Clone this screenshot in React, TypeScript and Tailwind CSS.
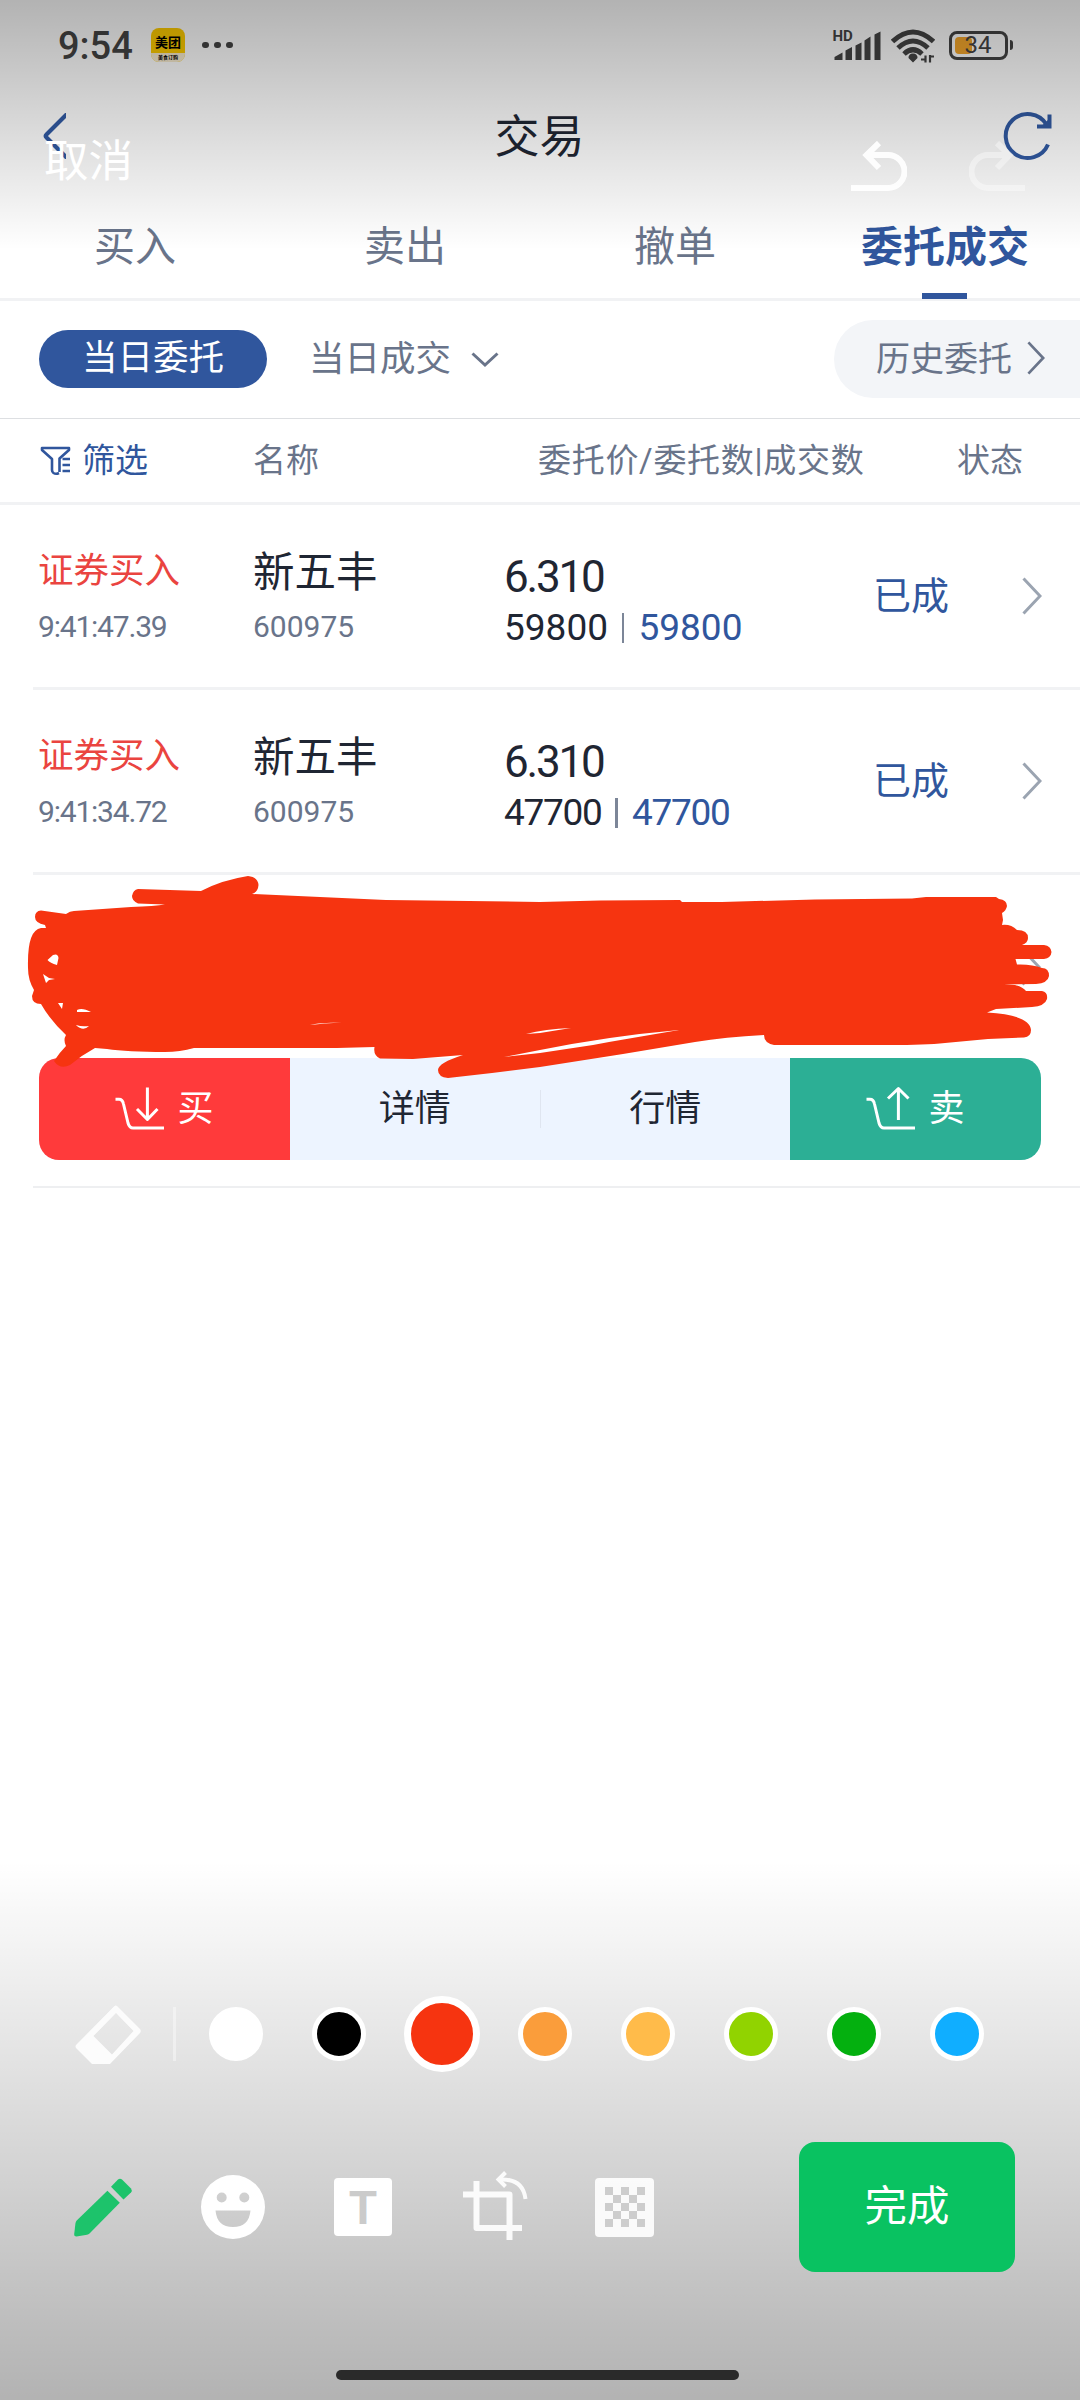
import { clsx } from "clsx"

const tabs = ["买入", "卖出", "撤单", "委托成交"]

const orders = [
  { side: "证券买入", time: "9:41:47.39", name: "新五丰", code: "600975", price: "6.310", amount: "59800", filled: "59800", status: "已成", tracking: "tracking-normal" },
  { side: "证券买入", time: "9:41:34.72", name: "新五丰", code: "600975", price: "6.310", amount: "47700", filled: "47700", status: "已成", tracking: "tracking-[-1.3px]" },
]

const swatches = [
  { name: "white", bg: "bg-white" },
  { name: "black", bg: "bg-black" },
  { name: "red", bg: "bg-[#f63410]", selected: true },
  { name: "orange", bg: "bg-[#fa9d3b]" },
  { name: "yellow", bg: "bg-[#ffbb4a]" },
  { name: "lime", bg: "bg-[#91d300]" },
  { name: "green", bg: "bg-[#04b00f]" },
  { name: "blue", bg: "bg-[#10aeff]" },
]

function Chevron({ className }: { className?: string }) {
  return (
    <svg viewBox="0 0 20 38" fill="none" stroke="currentColor" strokeWidth="3" className={className}>
      <path d="M1.5 1.5 L18 19 L1.5 36.5" />
    </svg>
  )
}

function CartIcon({ up }: { up?: boolean }) {
  return (
    <svg width="50" height="46" viewBox="0 0 50 46" fill="none" stroke="currentColor" strokeWidth="3" strokeLinejoin="round">
      <path d="M0.5 13.3 H4 Q7.5 13.3 8.5 18 L13 37 Q14.5 42 18 42 H49" />
      {up ? <path d="M32.4 34 V3 M22 12.5 L32.4 2.5 L42.5 12.5" /> : <path d="M32.4 1.5 V33 M22 23 L32.4 33.5 L42.5 23" />}
    </svg>
  )
}

function StatusBar() {
  return (
    <div className="flex h-[90px] items-center pr-[67px] pl-[58px] text-[#444]">
      <span className="w-[93px] pt-[1px] text-[38px] leading-none font-medium">9:54</span>
      <div className="flex h-[34px] w-[34px] flex-col overflow-hidden rounded-lg bg-[#fc0] text-center text-black">
        <span className="h-[25px] text-[13px] leading-[29px] font-bold">美团</span>
        <span className="h-[9px] bg-[#f8ecd0] text-[5px] leading-[8px] font-bold">美食订购</span>
      </div>
      <div className="ml-[17px] flex gap-[5.5px]">
        <i className="size-[6.5px] rounded-full bg-[#444]" />
        <i className="size-[6.5px] rounded-full bg-[#444]" />
        <i className="size-[6.5px] rounded-full bg-[#444]" />
      </div>
      <div className="ml-auto flex items-center">
        <div className="relative mr-[10px] h-[32px] w-[49px]">
          <span className="absolute top-0 left-[1px] text-[15px] leading-none font-bold">HD</span>
          <svg viewBox="0 0 49 32" className="h-[32px] w-[49px]" fill="currentColor">
            <path d="M2.5 31 V28 L10.5 23.5 V31 Z M13.500 31 V21.500 L20 18 V31 Z M23.500 31 V16.500 L29.500 13.500 V31 Z M32.500 31 V11.500 L38.500 7.500 V31 Z M42.500 31 V5.500 L48.500 2.500 V31 Z" />
          </svg>
        </div>
        <svg viewBox="0 0 44 34" className="mt-[2px] mr-[14px] h-[34px] w-[44px]" fill="none" stroke="currentColor" strokeWidth="5">
          <path d="M1.5 12.5 Q22 -6.5 42.500 12.500 M7 19 Q22 5 37 19 M13 25 Q22 16.500 31 25" />
          <path d="M22 24.500 a4 4 0 0 1 4.500 4.500 L22 33.500 L17.500 29 a4 4 0 0 1 4.500 -4.500" fill="currentColor" stroke="none" />
          <path d="M34.500 26.500 V33.500 M39 26 V33.500 M30 30.500 H34 M39 27.500 H43" strokeWidth="2.200" />
        </svg>
        <div className="relative flex h-[29px] w-[59px] items-center justify-center rounded-lg border-[3px] border-[#444]">
          <i className="absolute top-[3px] left-[3px] h-[17px] w-[17px] rounded-sm bg-[#f6a82c]" />
          <span className="relative text-[24px] leading-none">34</span>
        </div>
        <i className="ml-[2px] h-[10px] w-[3.5px] rounded-r bg-[#444]" />
      </div>
    </div>
  )
}

function TitleBar() {
  return (
    <div className="grid h-[92px] grid-cols-[1fr_auto_1fr] items-center pr-[27px] pl-[42px]">
      <svg width="24" height="46" viewBox="0 0 24 46" fill="none" stroke="#315aa3" strokeWidth="4.200" strokeLinecap="round" strokeLinejoin="round">
        <path d="M24 2 L4.500 21.500 Q3 23 4.500 24.500 L24 44" />
      </svg>
      <h1 className="-ml-[16px] pt-[3px] text-[45px] leading-none text-[#1f2633]">交易</h1>
      <svg width="50" height="50" viewBox="0 0 50 50" fill="none" stroke="#315aa3" strokeWidth="4" className="justify-self-end">
        <path d="M45 33.500 A22 22 0 1 1 43.500 13.500" />
        <path d="M46.500 3.500 V15.500 H34" />
        <path d="M46 8 V15.500 H38 Z" fill="#315aa3" stroke="none" />
      </svg>
    </div>
  )
}

function Tabs() {
  return (
    <div className="grid h-[119px] grid-cols-4 border-b-[3px] border-[#f1f2f4]">
      {tabs.map((tab, i) => {
        const active = i === tabs.length - 1
        return (
          <div key={tab} className="relative flex justify-center pt-[45px]">
            <span
              className={clsx(
                "leading-none",
                active ? "text-[42px] font-bold text-[#30569d]" : "text-[41px] text-[#69748a]"
              )}
            >
              {tab}
            </span>
            {active && <i className="absolute -bottom-[1px] left-[112px] h-[6px] w-[45px] bg-[#30569d]" />}
          </div>
        )
      })}
    </div>
  )
}

function SubTabs() {
  return (
    <div className="flex h-[118px] items-center border-b border-[#dddfe2] pl-[39px] text-[35.5px] leading-none text-[#69748a]">
      <span className="mb-[1px] flex h-[58px] w-[228px] items-center justify-center rounded-full bg-[#30569d] text-white">当日委托</span>
      <span className="ml-[42px]">当日成交</span>
      <svg width="28" height="16" viewBox="0 0 28 16" fill="none" stroke="currentColor" strokeWidth="3" className="ml-[20px]">
        <path d="M1.500 1.500 L14 13 L26.500 1.500" />
      </svg>
      <div className="mb-[1px] ml-auto flex h-[78px] w-[246px] items-center rounded-l-full bg-[#f3f5f8] pl-[42px]">
        <span className="text-[34px]">历史委托</span>
        <Chevron className="mb-[3px] ml-[15px] h-[34px] w-[18px]" />
      </div>
    </div>
  )
}

function TableHead() {
  return (
    <div className="flex h-[86px] items-center border-b-[3px] border-[#f1f2f4] pl-[40px] text-[33px] leading-none text-[#69748a]">
      <div className="flex w-[213px] items-center text-[#30569d]">
        <svg width="31" height="30" viewBox="0 0 31 30" fill="none" stroke="currentColor" strokeWidth="2.600" strokeLinejoin="round" className="mr-[11px]">
          <path d="M19 27 Q16 28.500 13.500 27 Q12 26 12 24 V13 L2 4 V2 H29 V4 L19.500 12.500 V26" />
          <path d="M22.500 13 H30 M22.500 19 H30 M22.500 25 H30" />
        </svg>
        <span>筛选</span>
      </div>
      <span className="w-[285px]">名称</span>
      <span className="w-[419px] tracking-[0.7px]">委托价/委托数|成交数</span>
      <span>状态</span>
    </div>
  )
}

function OrderRow({ order }: { order: (typeof orders)[number] }) {
  return (
    <div className="ml-[33px] flex h-[185px] border-b-[3px] border-[#f1f2f4] pl-[5px] leading-none">
      <div className="w-[215px] pt-[48px]">
        <p className="text-[35.5px] leading-[36px] text-[#ea4440]">{order.side}</p>
        <p className="mt-[22px] text-[30px] leading-[32px] tracking-[-1.2px] text-[#69748a]">{order.time}</p>
      </div>
      <div className="w-[251px] pt-[48px]">
        <p className="text-[41.5px] leading-[40px] text-[#1f2633]">{order.name}</p>
        <p className="mt-[18px] text-[30px] leading-[32px] text-[#69748a]">{order.code}</p>
      </div>
      <div className="w-[369px] pt-[50px] text-[#1f2633]">
        <p className="text-[44px] leading-[44px] tracking-[-2.2px]">{order.price}</p>
        <p className={clsx("mt-[11px] flex items-center text-[37px] leading-[36px]", order.tracking)}>
          {order.amount}
          <i className="mx-[14px] h-[30px] w-[2.5px] bg-[#7c8698]" />
          <span className="text-[#30569d]">{order.filled}</span>
        </p>
      </div>
      <span className="w-[149px] pt-[72px] text-[38px] text-[#30569d]">{order.status}</span>
      <Chevron className="mt-[72px] h-[38px] w-[20px] text-[#9ba4b1]" />
    </div>
  )
}

function ExpandedRow() {
  return (
    <div className="ml-[33px] h-[313px] border-b-2 border-[#eeeff1] pr-[39px] pl-[6px]">
      <div className="flex h-[183px] justify-end pt-[73px]">
        <Chevron className="h-[38px] w-[20px] text-[#9ba4b1]" />
      </div>
      <div className="flex h-[102px] w-[1002px] overflow-hidden rounded-[20px] bg-[#edf4ff] text-[36px] leading-none text-[#1f2633]">
        <div className="flex w-[251px] items-center justify-center gap-[12px] bg-[#ff3a3b] text-white">
          <CartIcon />
          <span>买</span>
        </div>
        <div className="flex flex-1 items-center justify-center">详情</div>
        <i className="h-[38px] w-px self-center bg-[#dfe5f0]" />
        <div className="flex flex-1 items-center justify-center">行情</div>
        <div className="flex w-[251px] items-center justify-center gap-[12px] bg-[#2caf95] text-white">
          <CartIcon up />
          <span>卖</span>
        </div>
      </div>
    </div>
  )
}

// freehand marker stroke drawn over the third order
function Scribble() {
  return (
    <svg className="absolute top-[860px] left-0 h-[240px] w-[1080px]" viewBox="0 860 1080 240" fill="#f63410" fillRule="evenodd">
      <path
        d="M41 910.5 L66 914 Q70 911 74 911 L131 907 Q155 906 165 904.500 L138 903.500 Q132 901 132 896 Q133 890 138 889 L201 891 Q222 880 248 876 Q258 877 258.500 885 Q258 892 252 894 L386 900 L540 902 L600 900.500 L680 900 L682 902 L722 902 L815 899.500 L912 898.500 L926 897 L996 897 L999 899 Q1007 900 1007 906 Q1006 911 1002 913 L1003 920 L1002 925 Q1011 924 1017 930 Q1028 930 1028 938 Q1028 943 1022 945 L1044 945 Q1051 946 1051.500 952 Q1051 958 1044 959 L1015.500 959 L1017 964.500 Q1032 964 1042 968 Q1049 968 1049 976 Q1048 983 1036 984 L1004 984.500 L1015 985 Q1023 987 1026 991 L1042 991 Q1048 992 1047 999 Q1045 1006 1032 1007 L996 1009 L987 1012.500 Q1030 1015 1031 1030 Q1031 1037 1024 1037.500 L988 1039 L945 1043 Q925 1045 890 1045 L774 1045 Q764 1043 764 1035 Q725 1037 695 1042 L623 1054 L540 1067 L492 1073 L448 1078 Q438 1077 438 1070 Q438 1063 463 1055 L413 1059 L380 1058.500 Q373 1055 374.500 1047 L337 1048 L194 1048 Q180 1052 165 1052 Q127 1052 107 1049 L95 1048 Q82 1055 70 1065 Q60 1070 54 1061 Q60 1052 66 1046 Q63 1040 66 1035 Q50 1020 41 1004 Q32 1004 32 996 L34 990 Q28 980 28 968 Q27 930 41 928 L46 928 L45 925 Q35 923 35 917 Q35 911 41 910.500 Z
        M53 955 Q58 953 58.500 958 L57 965 Q50 963 47.500 960 Z
        M43 974 L49 978 L55 979 L49 980 L46 983 Z
        M58 1003 H63 L62 1009 Z
        M77 1010 Q82 1007 91 1012 L77 1012 Z
        M76 1025 Q82 1027 89 1026 Q83 1032 76 1025 Z
        M310 1025 Q318 1022.500 342 1022.500 L325 1023.500 Z
        M526 1034 Q545 1029 571 1028 L540 1033 Z
        M504 1057 L540 1050 Q610 1036 679 1030 L609 1042 L593 1045 L540 1053 Z"
      />
    </svg>
  )
}

function UndoIcon({ className }: { className?: string }) {
  return (
    <svg width="56" height="52" viewBox="0 0 56 52" fill="none" stroke="white" strokeWidth="6" className={className}>
      <path d="M0 47 H37 a16.300 16.300 0 0 0 0 -33 H16" />
      <path d="M28 2 L15.500 14 L28 27" />
    </svg>
  )
}

function EditorTop() {
  return (
    <div className="absolute inset-x-0 top-0 flex h-[250px] items-start bg-linear-to-b from-black/30 to-transparent">
      <span className="mt-[140px] ml-[44px] text-[44.5px] leading-none text-white">取消</span>
      <UndoIcon className="mt-[141px] ml-auto opacity-95" />
      <UndoIcon className="mt-[141px] mr-[55px] ml-[62px] -scale-x-100 opacity-40" />
    </div>
  )
}

function EditorBottom() {
  return (
    <div className="absolute inset-x-0 bottom-0 h-[540px] bg-linear-to-b from-transparent to-black/30">
      <div className="flex h-[348px] items-center pl-[75px]">
        <svg width="67" height="60" viewBox="0 0 67 60" fill="white" fillRule="evenodd" opacity="0.9" className="mt-[2px]">
          <path d="M42 1 L65 24 Q66.500 26 65 28 L35 59 H17 L1 43 Q0 41.500 1 40 L39 1.500 Q40.500 0 42 1 Z M41 8 L18.500 31 L37 49.500 L58.500 26 Z" />
        </svg>
        <i className="ml-[31px] h-[54px] w-[3px] bg-white/40" />
        <div className="ml-[8px] flex">
          {swatches.map((s) => (
            <span key={s.name} className="flex w-[103px] justify-center">
              <i
                className={clsx(
                  "shrink-0 self-center rounded-full border-white",
                  s.bg,
                  s.selected ? "size-[76px] border-[7px]" : "size-[54px] border-[5px]"
                )}
              />
            </span>
          ))}
        </div>
      </div>
      <div className="-mt-[66px] flex h-[130px] items-center pl-[73px]">
        <svg width="60" height="60" viewBox="0 0 60 60" fill="#1dc36b">
          <path d="M34.400 13.700 L46.800 25.700 L16.500 56.500 Q15.500 57.500 14 57.800 L3.500 59.500 Q1 59.500 1.200 57 L2.500 46 Q2.800 44.500 4 43.300 Z" />
          <path d="M38 9.700 L45 2.500 Q47 1 49 2.500 L58 11.500 Q59.500 13.500 58 15.500 L50.500 22.500 Z" />
        </svg>
        <svg width="66" height="66" viewBox="0 0 66 66" fill="white" fillRule="evenodd" className="ml-[67px]">
          <path d="M33 1 a32 32 0 1 1 0 64 a32 32 0 1 1 0 -64 Z M21.700 18.500 a5 5 0 1 0 0 10 a5 5 0 1 0 0 -10 Z M44.300 18.500 a5 5 0 1 0 0 10 a5 5 0 1 0 0 -10 Z M15.500 36.500 Q17 53 33 53 Q49 53 50.500 36.500 Z" />
        </svg>
        <span className="ml-[68px] flex size-[58px] items-center justify-center rounded bg-white pt-[2px] text-[46px] leading-none font-bold text-[#cbcbcb]">T</span>
        <svg width="66" height="70" viewBox="0 0 66 70" fill="none" stroke="white" strokeWidth="6" strokeLinejoin="round" opacity="0.92" className="mb-[5px] ml-[70px]">
          <path d="M1 24.500 H47.500 V70 M14.500 11 V58 H60" />
          <path d="M38 9.500 Q61 8.500 63.500 29" strokeWidth="4" />
          <path d="M43.500 2.500 L36.500 9.500 L43.500 16.500" strokeWidth="4" strokeLinejoin="miter" />
        </svg>
        <div className="ml-[67px] size-[59px] rounded bg-white/90 p-[9.5px]">
          <div className="grid h-[40px] grid-cols-5 grid-rows-5">
            {Array.from({ length: 25 }, (_, i) => (
              <i key={i} className={i % 2 === 0 ? "bg-[#cdcdcd]" : ""} />
            ))}
          </div>
        </div>
        <button className="ml-[145px] h-[130px] w-[216px] rounded-2xl bg-[#09c261] text-[42.5px] leading-none text-white">完成</button>
      </div>
      <div className="mt-[98px] ml-[336px] h-[10px] w-[403px] rounded-full bg-[#2a2a2a]" />
    </div>
  )
}

export default function App() {
  return (
    <div className="relative h-[2400px] w-[1080px] overflow-hidden bg-white font-[Roboto,'Noto_Sans_CJK_SC',sans-serif]">
      <StatusBar />
      <TitleBar />
      <Tabs />
      <SubTabs />
      <TableHead />
      {orders.map((order) => (
        <OrderRow key={order.time} order={order} />
      ))}
      <ExpandedRow />
      <Scribble />
      <EditorTop />
      <EditorBottom />
    </div>
  )
}
